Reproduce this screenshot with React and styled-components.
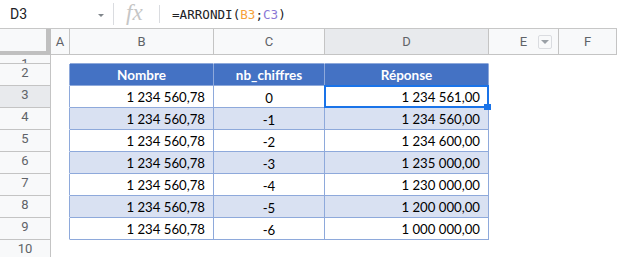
import React from "react";
import styled, { createGlobalStyle } from "styled-components";

const GlobalStyle = createGlobalStyle`
  html, body {
    margin: 0;
    padding: 0;
    background: #fff;
    overflow: hidden;
  }
`;

const HEADER_LINE = "#c4c4c4";
const TABLE_LINE = "#8ea9db";

const rows = [
  { n: "1 234 560,78", d: "0", r: "1 234 561,00" },
  { n: "1 234 560,78", d: "-1", r: "1 234 560,00" },
  { n: "1 234 560,78", d: "-2", r: "1 234 600,00" },
  { n: "1 234 560,78", d: "-3", r: "1 235 000,00" },
  { n: "1 234 560,78", d: "-4", r: "1 230 000,00" },
  { n: "1 234 560,78", d: "-5", r: "1 200 000,00" },
  { n: "1 234 560,78", d: "-6", r: "1 000 000,00" },
];

const Page = styled.div`
  width: 617px;
  height: 257px;
  overflow: hidden;
  font-family: Roboto, "Liberation Sans", sans-serif;
`;

const FormulaBar = styled.div`
  display: flex;
  align-items: center;
  height: 28px;
  border-bottom: 1px solid #c7c7c7;
`;

const NameBox = styled.div`
  box-sizing: border-box;
  width: 113px;
  height: 100%;
  display: flex;
  align-items: center;
  justify-content: space-between;
  padding: 0 9px 0 10px;
  font-size: 14px;
  color: #202124;
`;

const Caret = styled.span`
  width: 0;
  height: 0;
  border-left: 3px solid transparent;
  border-right: 3px solid transparent;
  border-top: 3px solid #80868b;
  margin-top: 2px;
`;

const Divider = styled.div`
  width: 1px;
  height: ${(p) => p.$h}px;
  background: #dadce0;
`;

const Fx = styled.span`
  margin: -3px 11px 0 12px;
  width: 22px;
  font-family: "Liberation Serif", serif;
  font-style: italic;
  font-size: 23px;
  line-height: 1;
  color: #c6c6c6;
`;

const Formula = styled.div`
  margin-left: 12px;
  font-family: "DejaVu Sans Mono", "Liberation Mono", monospace;
  font-size: 12.6px;
  color: #202124;
`;

const Ref = styled.span`
  color: ${(p) => p.$color};
`;

const Sheet = styled.div`
  display: grid;
  grid-template-columns: 51px 19px 144px 111px 164px 70px 1fr;
  grid-template-rows: 26px 9px repeat(9, 22px);
  & > * {
    box-sizing: border-box;
  }
`;

const Corner = styled.div`
  background: #f8f9fa;
  border-right: 5px solid #c0c0c0;
  border-bottom: 4px solid #c0c0c0;
`;

const ColHeader = styled.div`
  position: relative;
  display: flex;
  align-items: center;
  justify-content: center;
  background: ${(p) => (p.$active ? "#e8eaed" : "#f8f9fa")};
  border-right: 1px solid ${HEADER_LINE};
  border-bottom: 1px solid ${HEADER_LINE};
  font-size: 13px;
  color: #5f6368;
`;

const FilterButton = styled.span`
  position: absolute;
  right: 6px;
  top: 6px;
  box-sizing: border-box;
  width: 14px;
  height: 14px;
  border: 1px solid #dadce0;
  border-radius: 2px;
  background: #f8f9fa;
  display: flex;
  align-items: center;
  justify-content: center;
  &::after {
    content: "";
    border-left: 4px solid transparent;
    border-right: 4px solid transparent;
    border-top: 4px solid #9aa0a6;
  }
`;

const RowHeader = styled.div`
  display: flex;
  justify-content: center;
  align-items: flex-start;
  overflow: hidden;
  padding-top: 2px;
  line-height: 13px;
  background: ${(p) => (p.$active ? "#e8eaed" : "#f8f9fa")};
  border-right: 1px solid ${HEADER_LINE};
  border-bottom: 1px solid ${HEADER_LINE};
  font-size: 13px;
  color: #5f6368;
`;

const Blank = styled.div`
  border-right: 1px solid ${(p) => p.$right || "transparent"};
  border-bottom: 1px solid ${(p) => p.$bottom || "transparent"};
`;

const HeadCell = styled.div`
  display: flex;
  align-items: center;
  justify-content: center;
  background: #4472c4;
  border-right: 1px solid ${TABLE_LINE};
  border-bottom: 1px solid ${TABLE_LINE};
  font-family: Lato, "Open Sans", sans-serif;
  font-weight: 700;
  font-size: 13.5px;
  color: #fff;
`;

const DataCell = styled.div`
  position: relative;
  display: flex;
  align-items: center;
  justify-content: ${(p) => (p.$center ? "center" : "flex-end")};
  padding: ${(p) => (p.$center ? "3px 0 0" : "0 8px 0 0")};
  background: ${(p) => (p.$alt ? "#d9e1f2" : "#fff")};
  border-right: 1px solid ${TABLE_LINE};
  border-bottom: 1px solid ${TABLE_LINE};
  font-family: Lato, "Open Sans", sans-serif;
  font-size: 13.2px;
  color: #000;
  z-index: ${(p) => (p.$selected ? 2 : "auto")};
`;

const Selection = styled.span`
  position: absolute;
  left: -1px;
  top: -1px;
  right: -1px;
  bottom: -1px;
  border: 2px solid #1a73e8;
  pointer-events: none;
`;

const Handle = styled.span`
  position: absolute;
  right: -3px;
  bottom: -3px;
  width: 7px;
  height: 6px;
  background: #1a73e8;
`;

export default function App() {
  const cols = ["A", "B", "C", "D", "E", "F"];
  return (
    <Page>
      <GlobalStyle />
      <FormulaBar>
        <NameBox>
          D3
          <Caret />
        </NameBox>
        <Divider $h={22} />
        <Fx>fx</Fx>
        <Divider $h={18} />
        <Formula>
          =ARRONDI(<Ref $color="#f6a13a">B3</Ref>;<Ref $color="#8a78d6">C3</Ref>)
        </Formula>
      </FormulaBar>

      <Sheet>
        <Corner />
        {cols.map((c) => (
          <ColHeader key={c} $active={c === "D"}>
            {c}
            {c === "E" && <FilterButton />}
          </ColHeader>
        ))}

        <RowHeader>1</RowHeader>
        <Blank />
        <Blank $bottom={TABLE_LINE} />
        <Blank $bottom={TABLE_LINE} />
        <Blank $bottom={TABLE_LINE} />
        <Blank />
        <Blank />

        <RowHeader>2</RowHeader>
        <Blank $right={TABLE_LINE} />
        <HeadCell>Nombre</HeadCell>
        <HeadCell>nb_chiffres</HeadCell>
        <HeadCell>Réponse</HeadCell>
        <Blank />
        <Blank />

        {rows.map((row, i) => {
          const num = i + 3;
          const alt = i % 2 === 1;
          return (
            <React.Fragment key={num}>
              <RowHeader $active={num === 3}>{num}</RowHeader>
              <Blank $right={TABLE_LINE} />
              <DataCell $alt={alt}>{row.n}</DataCell>
              <DataCell $alt={alt} $center>
                {row.d}
              </DataCell>
              <DataCell $alt={alt} $selected={num === 3}>
                {row.r}
                {num === 3 && (
                  <>
                    <Selection />
                    <Handle />
                  </>
                )}
              </DataCell>
              <Blank />
              <Blank />
            </React.Fragment>
          );
        })}

        <RowHeader>10</RowHeader>
      </Sheet>
    </Page>
  );
}
